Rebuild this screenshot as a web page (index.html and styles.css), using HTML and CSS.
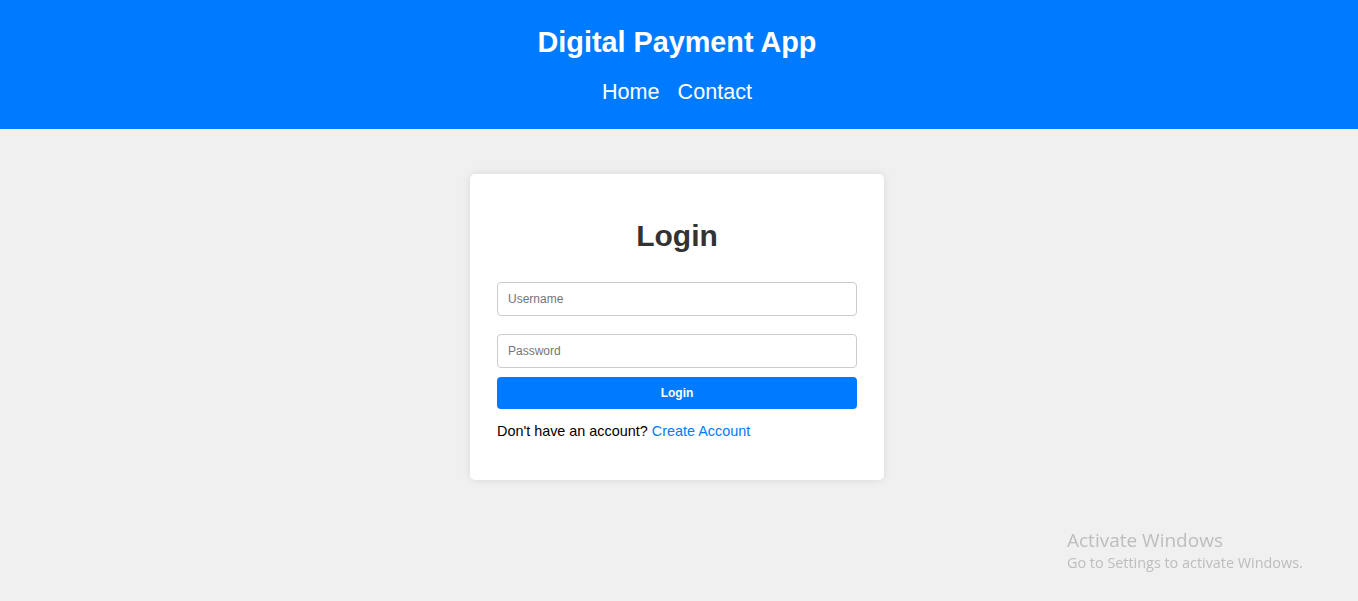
FILE: index.html
```html
<!DOCTYPE html>
<html lang="en">
<head>
<meta charset="utf-8">
<title>Digital Payment App</title>
<link rel="stylesheet" href="styles.css">
</head>
<body>
<header class="site-header">
  <h1 class="brand">Digital Payment App</h1>
  <nav class="nav">
    <a href="#" class="nav-link">Home</a>
    <a href="#" class="nav-link">Contact</a>
  </nav>
</header>
<main class="main">
  <section class="card">
    <h2 class="card-title">Login</h2>
    <form class="form">
      <input class="field" type="text" placeholder="Username">
      <input class="field" type="password" placeholder="Password">
      <button class="btn" type="button">Login</button>
    </form>
    <p class="signup">Don't have an account? <a href="#" class="signup-link">Create Account</a></p>
  </section>
</main>
<div class="watermark">
  <div class="wm-title">Activate Windows</div>
  <div class="wm-sub">Go to Settings to activate Windows.</div>
</div>
</body>
</html>
```

FILE: styles.css
```css
* { box-sizing: border-box; }
html, body { margin: 0; padding: 0; }
body {
  background: #f0f0f0;
  font-family: "Liberation Sans", Arial, sans-serif;
  color: #000;
  height: 601px;
  overflow: hidden;
}
.site-header {
  background: #007bff;
  color: #fff;
  height: 129px;
  display: flex;
  flex-direction: column;
  align-items: center;
  padding-top: 25px;
  padding-right: 4px;
}
.brand {
  margin: 0;
  font-size: 28.8px;
  font-weight: bold;
  line-height: 34px;
}
.nav {
  display: flex;
  gap: 18px;
  margin-top: 20px;
}
.nav-link {
  color: #fff;
  text-decoration: none;
  font-size: 21.6px;
  line-height: 26px;
}
.main {
  display: flex;
  justify-content: center;
  padding-top: 45px;
  padding-right: 4px;
}
.card {
  width: 414px;
  height: 306px;
  background: #fff;
  border-radius: 5px;
  box-shadow: 0 0 8px rgba(0,0,0,0.1);
  padding: 27px 27px;
}
.card-title {
  margin: 0;
  text-align: center;
  font-size: 30px;
  font-weight: bold;
  color: #333;
  line-height: 36px;
  padding-top: 17px;
}
.form {
  display: flex;
  flex-direction: column;
  margin-top: 28px;
}
.field {
  height: 34px;
  border: 1px solid #ccc;
  border-radius: 4px;
  padding: 0 10px;
  font-family: "Liberation Sans", Arial, sans-serif;
  font-size: 12px;
  margin-bottom: 18px;
  outline: none;
}
.field::placeholder { color: #757575; }
.field + .field { margin-bottom: 9px; }
.btn {
  height: 32px;
  background: #007bff;
  color: #fff;
  border: none;
  border-radius: 4px;
  font-family: "Liberation Sans", Arial, sans-serif;
  font-size: 12px;
  font-weight: bold;
}
.signup {
  margin: 14px 0 0;
  font-size: 14.4px;
  line-height: 17px;
}
.signup-link {
  color: #007bff;
  text-decoration: none;
}
.watermark {
  position: fixed;
  left: 1067px;
  top: 528px;
  color: #bdbdbd;
  font-family: "Open Sans", "Noto Sans", sans-serif;
}
.wm-title { font-size: 19px; line-height: 24px; }
.wm-sub { font-size: 14.4px; line-height: 21px; }
```
